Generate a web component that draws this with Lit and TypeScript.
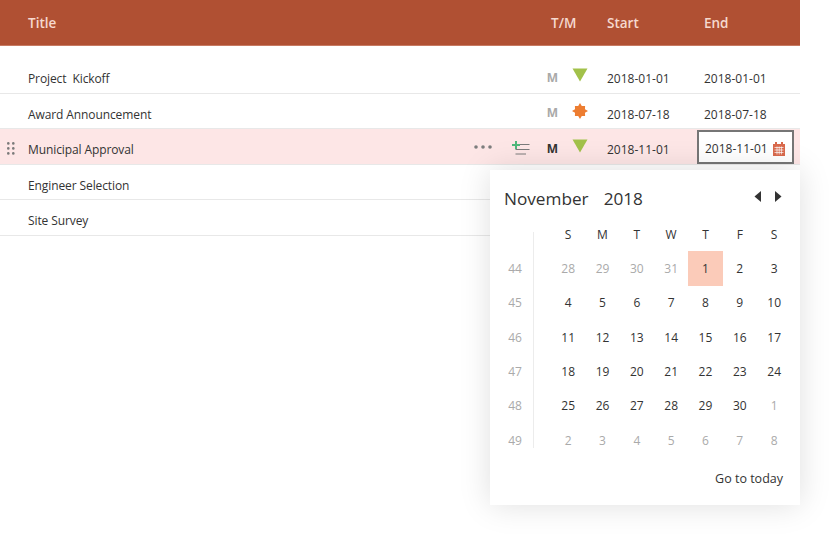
import { LitElement, html, css, svg } from "lit";
import { customElement } from "lit/decorators.js";

const rows = [
  { t: "Project  Kickoff", s: "2018-01-01", e: "2018-01-01", k: "tri" },
  { t: "Award Announcement", s: "2018-07-18", e: "2018-07-18", k: "burst" },
  { t: "Municipal Approval", s: "2018-11-01", e: "2018-11-01", k: "tri", active: true },
  { t: "Engineer Selection", s: "", e: "", k: "" },
  { t: "Site Survey", s: "", e: "", k: "" },
];
const weeks = [44, 45, 46, 47, 48, 49];
const days = [
  28, 29, 30, 31, 1, 2, 3, 4, 5, 6, 7, 8, 9, 10, 11, 12, 13, 14, 15, 16, 17, 18, 19, 20, 21, 22, 23, 24, 25, 26, 27, 28,
  29, 30, 1, 2, 3, 4, 5, 6, 7, 8,
];

const tri = svg`<svg width="16" height="14" viewBox="0 0 16 14"><path d="M0.5 0.5H15.5L8 13.5Z" fill="#a2c14a"/></svg>`;
const burst = svg`<svg width="16" height="16" viewBox="0 0 17 17"><path d="M8.5 0L10.4 3.2 13.9 3.1 13.8 6.6 17 8.5 13.8 10.4 13.9 13.9 10.4 13.8 8.5 17 6.6 13.8 3.1 13.9 3.2 10.4 0 8.5 3.2 6.6 3.1 3.1 6.6 3.2Z" fill="#ed7d31"/></svg>`;
const grip = svg`<svg width="8" height="13" viewBox="0 0 8 13" fill="#7a7a7a"><circle cx="1.3" cy="1.4" r="1.3"/><circle cx="6.3" cy="1.4" r="1.3"/><circle cx="1.3" cy="6.4" r="1.3"/><circle cx="6.3" cy="6.4" r="1.3"/><circle cx="1.3" cy="11.4" r="1.3"/><circle cx="6.3" cy="11.4" r="1.3"/></svg>`;
const dots = svg`<svg width="18" height="4" viewBox="0 0 18 4" fill="#7d7d7d"><circle cx="2" cy="2" r="1.8"/><circle cx="9" cy="2" r="1.8"/><circle cx="16" cy="2" r="1.8"/></svg>`;
const add = svg`<svg width="18" height="14" viewBox="0 0 18 14"><path d="M4 0V8M0 4H8" stroke="#4fb77a" stroke-width="2" fill="none"/><path d="M8 3.5H17.5M3.5 8.5H17.5M3.5 13H14" stroke="#7a7a7a" stroke-width="1" fill="none"/></svg>`;
const cal = svg`<svg width="12" height="14" viewBox="0 0 12 14"><path d="M2 0h2v2h4V0h2v2h2v12H0V2h2Z" fill="#d9694c"/><path d="M1.5 5.5h9M1.5 8h9M1.5 10.5h9M4 4.5v8M6.2 4.5v8M8.4 4.5v8" stroke="#fff" stroke-width=".7" fill="none"/></svg>`;
const left = svg`<svg width="8" height="11" viewBox="0 0 8 11"><path d="M7 0V11L0.5 5.5Z" fill="#333"/></svg>`;
const right = svg`<svg width="8" height="11" viewBox="0 0 8 11"><path d="M1 0V11L7.5 5.5Z" fill="#333"/></svg>`;

@customElement("app-root")
export class AppRoot extends LitElement {
  static styles = css`
    :host {
      display: block;
      width: 832px;
      height: 538px;
      overflow: hidden;
      background: #fff;
      font-family: "Open Sans", "Noto Sans", sans-serif;
      font-size: 12px;
      color: #333;
    }
    .table {
      position: relative;
      width: 800px;
    }
    .cols {
      display: grid;
      grid-template-columns: 28px 1fr 28px 30px 30px 45px 97px 96px;
    }
    .head {
      height: 46px;
      background: #b05033;
      border-bottom: 1px solid #c77a62;
      box-sizing: border-box;
      color: #f6d9cf;
      font-size: 13.5px;
      font-weight: 600;
      align-items: center;
      margin-bottom: 12px;
    }
    .head .title { grid-column: 2 / 4; }
    .head .tm { grid-column: 5 / 7; padding-left: 19px; }
    .head .start { grid-column: 7; }
    .head .end { grid-column: 8; }
    .row {
      height: 35.5px;
      box-sizing: border-box;
      border-bottom: 1px solid #e8e8e8;
      align-items: center;
      padding-top: 6.6px;
    }
    .row.active { background: #fde6e6; }
    .grip, .dots, .add, .m, .sym {
      display: flex;
      align-items: center;
      justify-content: center;
      padding-bottom: 5px;
    }
    .grip { justify-content: flex-start; padding-left: 7px; padding-bottom: 3px; }
    .dots { justify-content: flex-start; }
    .add { justify-content: flex-start; padding-left: 10px; padding-bottom: 3px; }
    .m {
      justify-content: flex-end;
      padding-right: 4px;
      font-weight: 700;
      color: #a9a9a9;
      font-size: 12px;
    }
    .active .m { color: #333; }
    .sym { justify-content: flex-start; padding-left: 10px; padding-bottom: 7px; }
    .row .m { padding-bottom: 3px; }
    .date { white-space: pre; }
    .title-cell { white-space: pre; letter-spacing: -0.1px; }
    .editor {
      margin-left: -7px;
      margin-right: 6px;
      margin-top: -5.6px;
      height: 34px;
      box-sizing: border-box;
      border: 2px solid #767676;
      background: #fff;
      display: flex;
      align-items: center;
      justify-content: space-between;
      padding: 3px 7px 0 6px;
    }
    .pop {
      position: absolute;
      left: 490px;
      top: 170px;
      width: 310px;
      height: 335px;
      box-sizing: border-box;
      background: #fff;
      box-shadow: 0 0 30px rgba(0, 0, 0, 0.13);
      padding: 14px 14px 0 14px;
      display: flex;
      flex-direction: column;
    }
    .cap {
      display: flex;
      justify-content: space-between;
      align-items: center;
      height: 30px;
      font-size: 17.2px;
      color: #333;
      padding-right: 4px;
    }
    .cap .ym { display: flex; gap: 15px; padding-bottom: 2px; }
    .nav { display: flex; gap: 12px; padding-bottom: 5px; }
    .cal {
      display: grid;
      grid-template-columns: 30px 21px repeat(7, 34.33px);
      grid-auto-rows: 34.33px;
      margin-top: 3px;
      margin-left: -4px;
    }
    .c {
      display: flex;
      align-items: center;
      justify-content: center;
      font-size: 12px;
    }
    .wk { color: #aaa; }
    .sep {
      grid-column: 2;
      border-left: 1px solid #ececec;
      margin: 15px 0 9px 3px;
    }
    .off { color: #aaa; }
    .today { background: #fbcbb9; }
    .foot {
      text-align: right;
      margin-top: 13px;
      padding-right: 3px;
      font-size: 12.5px;
    }
  `;

  render() {
    return html`<div class="table">
      <div class="cols head">
        <span></span><span class="title">Title</span><span class="tm">T/M</span
        ><span class="start">Start</span><span class="end">End</span>
      </div>
      ${rows.map(
        (r) => html`<div class="cols row ${r.active ? "active" : ""}">
          <span class="grip">${r.active ? grip : ""}</span>
          <span class="title-cell">${r.t}</span>
          <span class="dots">${r.active ? dots : ""}</span>
          <span class="add">${r.active ? add : ""}</span>
          <span class="m">${r.k ? "M" : ""}</span>
          <span class="sym">${r.k === "tri" ? tri : r.k === "burst" ? burst : ""}</span>
          <span class="date">${r.s}</span>
          ${r.active
            ? html`<span class="editor"><span class="date">${r.e}</span>${cal}</span>`
            : html`<span class="date">${r.e}</span>`}
        </div>`
      )}
      <div class="pop">
        <div class="cap">
          <span class="ym"><span>November</span><span>2018</span></span>
          <span class="nav">${left}${right}</span>
        </div>
        <div class="cal">
          ${weeks.map(
            (w, i) => html`<span class="c wk" style="grid-row:${i + 2};grid-column:1">${w}</span>`
          )}
          <span class="sep" style="grid-row:1 / 8"></span>
          ${["S", "M", "T", "W", "T", "F", "S"].map(
            (d, i) => html`<span class="c hd" style="grid-row:1;grid-column:${i + 3}">${d}</span>`
          )}
          ${days.map((d, i) => {
            const off = i < 4 || i >= 34;
            const today = i === 4;
            return html`<span
              class="c ${off ? "off" : ""} ${today ? "today" : ""}"
              style="grid-row:${Math.floor(i / 7) + 2};grid-column:${(i % 7) + 3}"
              >${d}</span
            >`;
          })}
        </div>
        <div class="foot">Go to today</div>
      </div>
    </div>`;
  }
}
